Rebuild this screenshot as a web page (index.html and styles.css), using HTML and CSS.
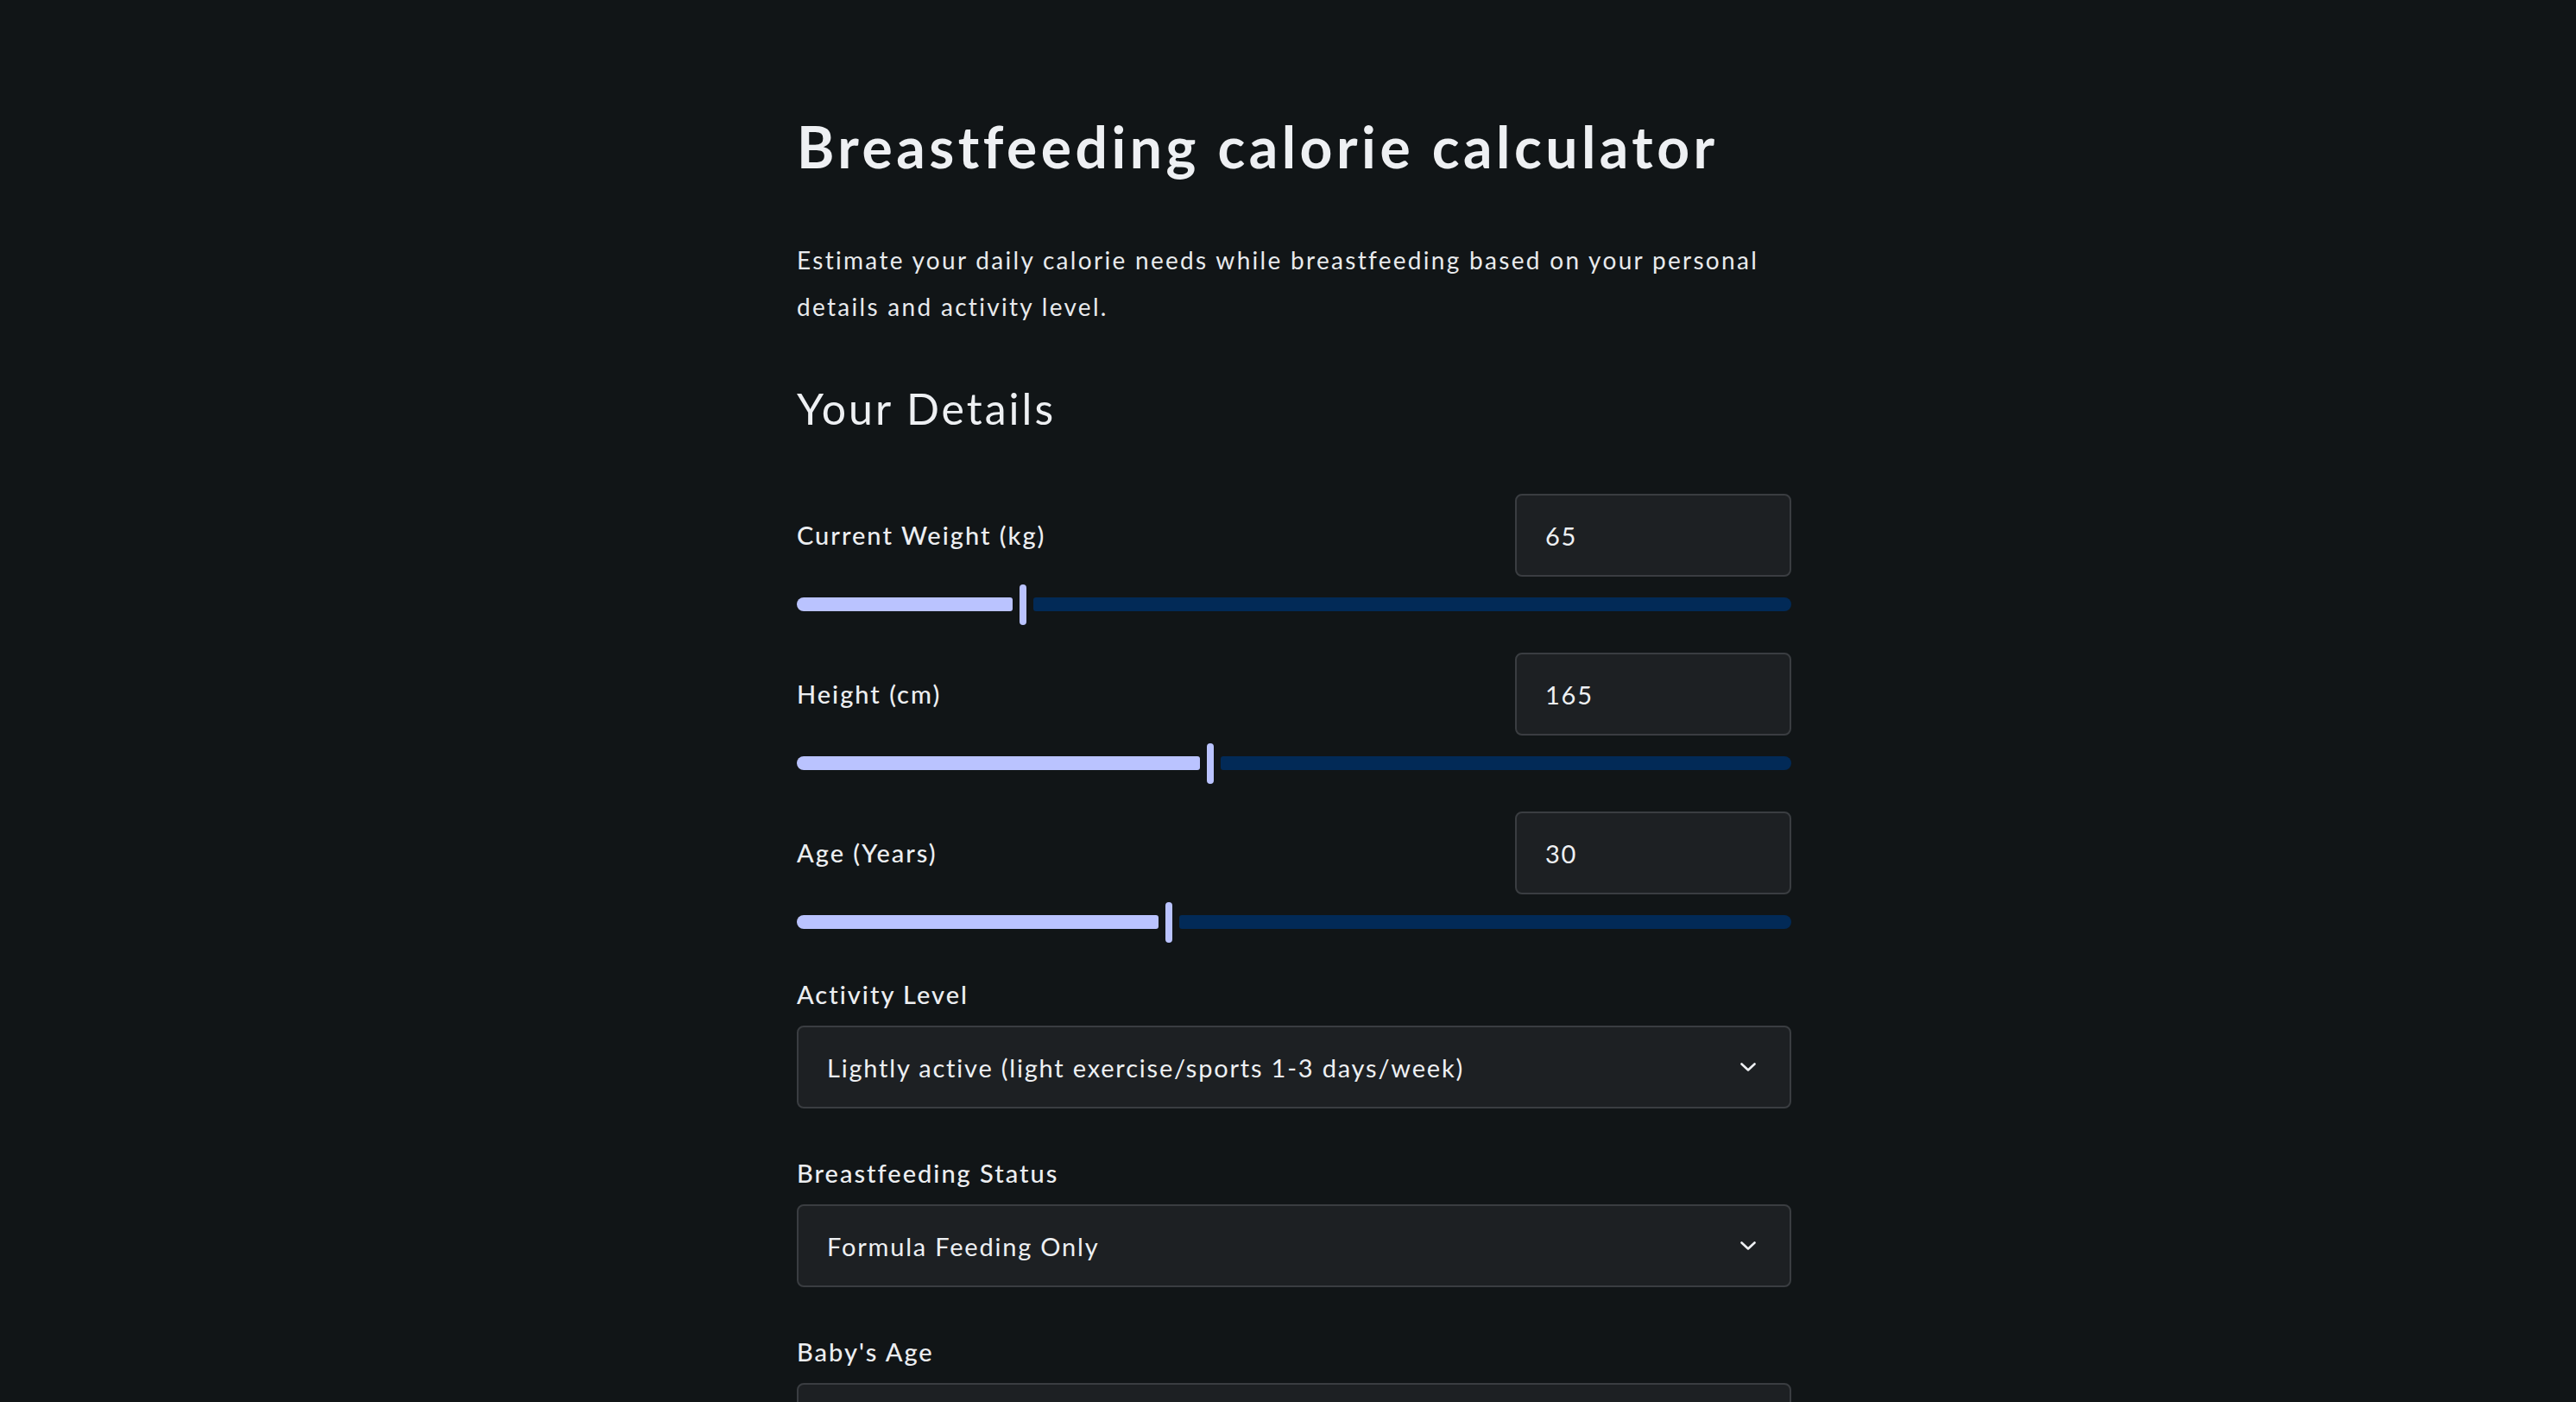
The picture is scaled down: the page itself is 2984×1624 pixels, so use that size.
FILE: index.html
```html
<!DOCTYPE html>
<html lang="en">
<head>
<meta charset="utf-8">
<title>Breastfeeding calorie calculator</title>
<link rel="stylesheet" href="styles.css">
</head>
<body>
<main class="page">
  <h1 class="title">Breastfeeding calorie calculator</h1>
  <p class="intro">Estimate your daily calorie needs while breastfeeding based on your personal details and activity level.</p>
  <h2 class="section-title">Your Details</h2>

  <div class="sliders">
    <div class="field">
      <div class="field-row">
        <label class="label" for="weight">Current Weight (kg)</label>
        <div class="num-input" id="weight">65</div>
      </div>
      <div class="slider">
        <div class="track-fill" style="width:250px"></div>
        <div class="thumb"></div>
        <div class="track-rest"></div>
      </div>
    </div>

    <div class="field">
      <div class="field-row">
        <label class="label" for="height">Height (cm)</label>
        <div class="num-input" id="height">165</div>
      </div>
      <div class="slider">
        <div class="track-fill" style="width:467px"></div>
        <div class="thumb"></div>
        <div class="track-rest"></div>
      </div>
    </div>

    <div class="field">
      <div class="field-row">
        <label class="label" for="age">Age (Years)</label>
        <div class="num-input" id="age">30</div>
      </div>
      <div class="slider">
        <div class="track-fill" style="width:419px"></div>
        <div class="thumb"></div>
        <div class="track-rest"></div>
      </div>
    </div>
  </div>

  <div class="selects">
    <div class="select-field">
      <div class="label">Activity Level</div>
      <div class="select">
        <span>Lightly active (light exercise/sports 1-3 days/week)</span>
        <svg class="chevron" viewBox="0 0 18 10" width="18" height="10"><polyline points="1.5,1.5 9,8.5 16.5,1.5" fill="none" stroke="#eef0f3" stroke-width="2.6" stroke-linecap="round" stroke-linejoin="round"/></svg>
      </div>
    </div>
    <div class="select-field">
      <div class="label">Breastfeeding Status</div>
      <div class="select">
        <span>Formula Feeding Only</span>
        <svg class="chevron" viewBox="0 0 18 10" width="18" height="10"><polyline points="1.5,1.5 9,8.5 16.5,1.5" fill="none" stroke="#eef0f3" stroke-width="2.6" stroke-linecap="round" stroke-linejoin="round"/></svg>
      </div>
    </div>
    <div class="select-field">
      <div class="label">Baby's Age</div>
      <div class="select">
        <span>0-6 months</span>
        <svg class="chevron" viewBox="0 0 18 10" width="18" height="10"><polyline points="1.5,1.5 9,8.5 16.5,1.5" fill="none" stroke="#eef0f3" stroke-width="2.6" stroke-linecap="round" stroke-linejoin="round"/></svg>
      </div>
    </div>
  </div>
</main>
</body>
</html>
```
FILE: styles.css
```css
html, body {
  margin: 0;
  padding: 0;
  background: #111517;
  color: #eef0f3;
  font-family: "Lato", "Liberation Sans", sans-serif;
}

.page {
  width: 1152px;
  margin: 0 0 0 calc(50% - 569px);
  padding: 131px 0 120px;
}

.title {
  margin: 0;
  font-size: 66px;
  line-height: 77px;
  font-weight: 700;
  letter-spacing: 4.5px;
}

.intro {
  margin: 66px 0 0;
  font-size: 28px;
  line-height: 54px;
  letter-spacing: 2.3px;
  color: #e8eaed;
}

.section-title {
  margin: 62px 0 0;
  font-size: 50px;
  line-height: 58px;
  font-weight: 400;
  letter-spacing: 3px;
}

.sliders {
  margin-top: 70px;
  display: flex;
  flex-direction: column;
  gap: 32px;
}

.field-row {
  display: flex;
  align-items: center;
  justify-content: space-between;
}

.label {
  font-size: 29px;
  line-height: 42px;
  font-weight: 500;
  letter-spacing: 2px;
  color: #eceef1;
}

.num-input {
  box-sizing: border-box;
  width: 320px;
  height: 96px;
  padding-left: 33px;
  display: flex;
  align-items: center;
  background: #1d2023;
  border: 2px solid #3a3d41;
  border-radius: 8px;
  font-size: 29px;
  letter-spacing: 1.8px;
}

.slider {
  margin-top: 8px;
  height: 48px;
  display: flex;
  align-items: center;
}

.track-fill {
  height: 16px;
  background: #bac3ff;
  border-radius: 8px 3px 3px 8px;
}

.thumb {
  width: 8px;
  height: 47px;
  margin: 0 8px;
  background: #bac3ff;
  border-radius: 4px;
}

.track-rest {
  flex: 1;
  height: 16px;
  background: #022a57;
  border-radius: 3px 8px 8px 3px;
}

.selects {
  margin-top: 39px;
  display: flex;
  flex-direction: column;
  gap: 54px;
}

.select-field {
  display: flex;
  flex-direction: column;
  gap: 15px;
}

.select {
  box-sizing: border-box;
  height: 96px;
  padding: 0 39px 0 33px;
  display: flex;
  align-items: center;
  justify-content: space-between;
  background: #1d2023;
  border: 2px solid #3a3d41;
  border-radius: 8px;
  font-size: 29px;
  letter-spacing: 1.8px;
}

.chevron {
  display: block;
}
```
